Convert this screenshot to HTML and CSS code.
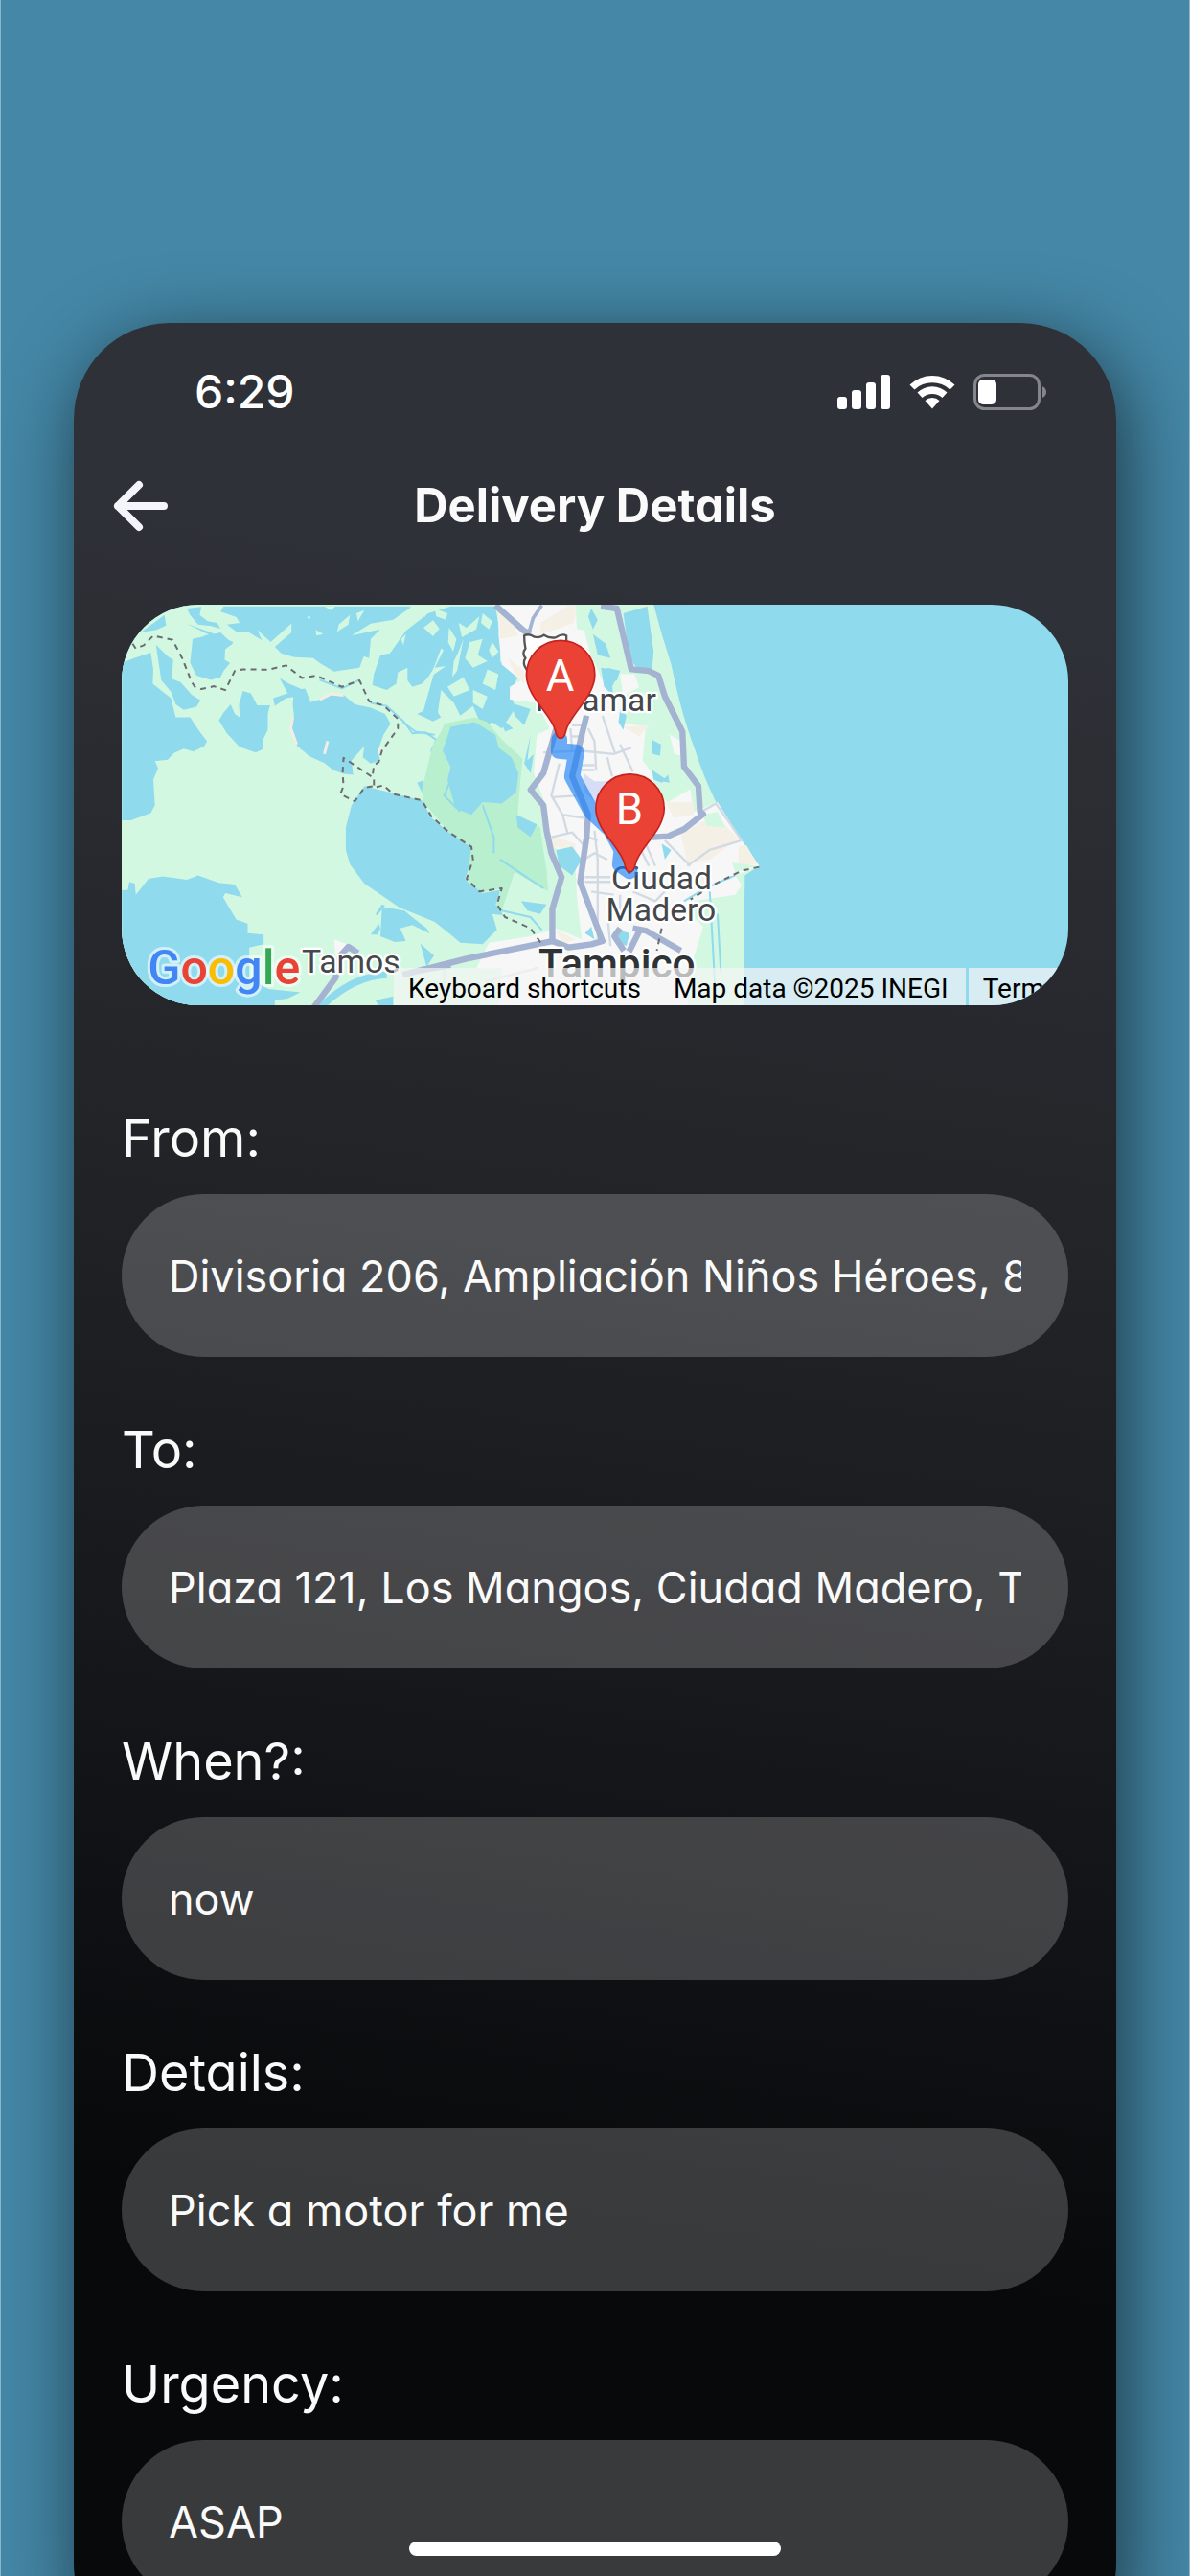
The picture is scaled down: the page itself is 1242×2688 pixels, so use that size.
FILE: index.html
```
<!DOCTYPE html>
<html lang="en">
<head>
    <meta charset="UTF-8">
    <meta name="viewport" content="width=device-width, initial-scale=1.0">
    <title>Delivery Details</title>
    <link rel="stylesheet" href="styles.css">
</head>
<body>

    <div class="stage">
        <main class="phone">
            <div class="status-bar">
                <span class="time">6:29</span>
                <div class="status-icons">
                    <svg class="signal" viewBox="0 0 56 38">
                        <rect x="0" y="24" width="10" height="13" rx="3"/>
                        <rect x="15" y="17" width="10" height="20" rx="3"/>
                        <rect x="30" y="9" width="10" height="28" rx="3"/>
                        <rect x="45" y="1" width="10" height="36" rx="3"/>
                    </svg>
                    <svg class="wifi" viewBox="0 0 48 38">
                        <path d="M0.500 11.500 A34 34 0 0 1 47.500 11.500 L42.500 16.500 A27 27 0 0 0 5.500 16.500 Z"/>
                        <path d="M8.500 19.500 A22.500 22.500 0 0 1 39.500 19.500 L34.500 25 A15.500 15.500 0 0 0 13.500 25 Z"/>
                        <path d="M16.500 28 A11 11 0 0 1 31.500 28 L24 36.500 Z"/>
                    </svg>
                    <svg class="battery" viewBox="0 0 77 38">
                        <rect class="battery-case" x="1.500" y="1.500" width="67" height="35" rx="10"/>
                        <rect x="5" y="6" width="19" height="26" rx="5"/>
                        <path class="battery-cap" d="M72 13 Q76 15 76 19 Q76 23 72 25 Z"/>
                    </svg>
                </div>
            </div>

            <header class="header">
                <button class="back" type="button" aria-label="Back">
                    <svg viewBox="0 0 58 54">
                        <path d="M27 5 L5 27 L27 49 M5 27 H53"/>
                    </svg>
                </button>
                <h1>Delivery Details</h1>
            </header>

            <div class="map">
                <svg class="map-canvas" viewBox="21 33 2961 1254" preserveAspectRatio="xMinYMin slice">
                    <defs>
                        <path id="pin" d="M0 0 C-10 0 -14 -10 -17 -25 C-28 -75 -107 -130 -107 -199 A107 107 0 0 1 107 -199 C107 -130 28 -75 17 -25 C14 -10 10 0 0 0 Z"/>
                    </defs>
                    <rect class="water" x="21" y="33" width="2961" height="1254"/>
                    <path class="land" d="M21 33 H1685 Q1710 130 1740 220 Q1770 370 1812 480 Q1840 570 1880 650 L2015 850 L1970 880 L1965 1290 H21 Z"/>

                    <!-- wetlands, west side -->
                    <g class="water">
                        <path d="M80 120 L155 65 160 98 130 112 Z"/>
                        <path d="M22 215 L60 200 112 183 120 235 118 280 175 325 190 385 235 385 265 430 288 460 280 475 245 492 215 483 185 497 165 518 125 522 135 545 120 580 125 660 112 685 50 707 22 707 Z"/>
                        <path d="M243 140 L330 120 368 155 345 172 343 205 360 215 340 240 330 260 300 268 255 255 235 215 Z"/>
                        <path d="M128 158 L165 195 182 205 178 265 205 275 240 315 268 332 255 352 215 362 190 345 175 305 145 270 Z"/>
                        <path d="M400 303 L425 310 445 348 485 348 478 375 478 425 463 455 463 485 440 495 390 478 350 435 325 395 340 370 362 345 375 375 390 385 388 345 Z"/>
                        <path d="M560 300 L595 295 612 338 640 330 680 312 715 315 750 345 800 355 845 375 862 405 840 440 822 490 830 520 800 530 775 510 780 475 740 520 745 565 715 562 683 550 655 528 610 508 570 475 550 420 560 380 556 345 Z"/>
                        <path d="M340 38 L930 38 870 80 800 92 740 130 830 110 800 140 795 200 778 195 765 230 685 242 640 215 620 200 560 197 520 185 500 165 552 120 552 92 487 150 445 112 460 145 420 120 380 118 350 95 390 90 380 72 330 55 Z"/>
                        <path d="M225 45 L270 40 265 65 290 85 320 90 330 108 300 100 260 95 235 65 Z"/>
                        <path d="M225 93 L300 120 370 150 365 158 290 125 Z M275 130 L305 125 300 135 Z"/>
                        <path d="M910 115 L935 95 980 60 1050 38 1190 38 1205 130 1205 210 1260 260 1240 300 1250 360 1210 420 1180 400 1150 420 1120 350 1080 380 1060 340 1020 300 1010 370 1020 385 995 398 945 375 965 365 980 310 1000 240 960 280 930 290 915 270 915 230 885 245 880 280 850 300 805 285 810 250 830 190 860 185 Z"/>
                        <path d="M515 262 L545 280 580 295 570 320 535 325 500 350 495 325 540 310 Z"/>
                        <path d="M780 600 L900 630 960 645 990 700 1045 745 1120 795 1110 850 1095 890 1150 935 1205 925 1195 965 1215 1005 1180 1000 1195 1050 1150 1095 1080 1090 1050 1065 1000 1025 890 980 780 905 735 845 722 800 722 730 740 660 Z"/>
                        <path d="M22 925 L40 925 45 900 62 905 65 940 105 890 150 883 225 893 260 880 325 903 375 908 398 948 345 935 338 948 380 1018 415 1030 415 1060 465 1065 465 1095 420 1105 420 1200 480 1235 580 1245 540 1265 500 1270 500 1290 22 1290 Z"/>
                        <path d="M835 985 L850 980 905 990 940 1018 975 1045 985 1062 930 1035 892 1045 910 1085 875 1088 830 1070 Z M815 1000 L835 970 845 975 820 1005 Z M800 1065 L825 1030 830 1045 822 1065 Z M955 1093 L998 1130 975 1165 Z M945 590 L965 582 975 625 960 620 Z M815 1270 L870 1258 870 1290 825 1290 Z"/>
                    </g>
                    <g class="land">
                        <path d="M700 95 L735 65 730 95 695 118 Z M628 112 L652 125 630 130 Z M755 60 L780 50 760 85 Z M655 38 L690 38 675 50 Z M600 72 L612 68 608 80 Z"/>
                        <path d="M965 105 L995 82 1015 108 995 132 Z M920 40 L975 40 970 72 940 55 Z M880 90 L905 55 930 90 900 110 Z M895 140 L910 125 902 160 Z"/>
                        <path d="M1020 170 L995 235 960 290 945 345 985 260 1035 225 1000 230 1028 175 Z M1045 105 L1068 140 1058 180 1042 150 Z"/>
                        <path d="M1075 90 L1100 105 1140 70 1130 110 1085 135 Z M1110 150 L1150 140 1135 190 1165 210 1120 230 1095 200 Z M1040 290 L1090 260 1110 300 1060 320 Z"/>
                        <path d="M1150 60 L1180 85 1170 110 1145 90 Z M1165 235 L1200 250 1190 300 1150 280 Z M1120 300 L1165 320 1150 360 1120 340 Z M1090 140 L1075 180 1060 210 1055 260 1070 240 Z"/>
                        <path d="M1000 45 L1040 60 1035 80 1005 70 Z M1180 150 L1200 180 1180 200 1170 175 Z"/>
                    </g>
                    <path class="river" d="M640 1295 Q740 1195 850 1190"/>
                    <path class="stream" d="M640 268 L710 295 765 268 M800 340 L850 350 905 400 930 435 970 432 1005 455 990 490 1015 550 1045 600 1030 640 1055 680"/>
                    <path class="sand-line" d="M640 330 L675 312 715 316 M556 385 L550 420 568 470 M665 460 L655 500 M835 480 L825 500"/>

                    <g transform="translate(900 0)">
                        <path class="park" d="M225 385 L265 400 310 455 375 515 365 620 360 690 430 730 440 800 450 860 455 930 350 870 310 990 290 970 310 920 250 932 200 900 215 790 145 745 65 650 60 610 95 470 120 430 130 405 Z"/>
                        <path class="water" d="M150 415 L225 400 290 440 300 480 340 510 362 560 355 620 310 655 250 650 215 690 165 670 140 580 150 540 125 490 Z"/>
                        <path class="land" d="M350 870 L455 930 465 1060 430 1060 400 1040 310 1000 Z"/>
                        <path class="water" d="M590 45 L610 80 595 110 580 70 Z M590 120 L640 150 650 210 610 190 Z M690 60 L765 38 785 180 780 235 735 235 710 200 Z M640 230 L680 240 670 270 640 280 Z"/>

                        <!-- built-up area -->
                        <path class="urban" d="M300 35 L540 35 545 110 580 115 590 190 620 260 640 300 680 330 680 400 760 415 750 520 780 560 790 630 830 650 900 610 910 680 985 650 1060 770 1115 850 1040 880 1060 910 1040 940 910 960 890 990 940 1040 900 1170 890 1290 300 1290 310 1170 230 1170 270 1090 400 1070 480 1045 560 1080 545 950 540 830 470 790 440 640 410 560 420 440 460 420 420 340 335 330 335 290 370 270 310 220 300 130 Z"/>
                        <path class="urban" d="M835 440 L870 460 870 505 850 500 Z M680 250 L725 250 740 290 690 320 Z"/>
                        <path class="sand" d="M300 45 L340 75 360 130 305 140 Z M430 90 L520 35 545 40 535 90 480 110 430 125 Z M330 200 L380 240 380 280 350 250 Z M690 415 L770 410 740 445 Z M820 650 L910 650 910 690 850 700 Z M870 750 L940 710 1000 715 1050 765 960 830 890 840 Z M1050 790 L1075 785 1110 845 1050 850 Z M480 1050 L540 1080 500 1095 Z M870 870 L960 870 960 910 900 900 Z M450 750 L540 780 540 800 470 790 Z"/>
                        <path class="land" d="M550 45 L620 40 680 130 700 200 640 225 590 200 Z M740 240 L790 250 810 340 790 380 740 350 Z M1030 840 L1110 850 1040 870 Z M940 690 L985 680 1010 730 950 725 Z"/>
                        <path class="water" d="M590 45 L610 80 595 110 580 70 Z M595 125 L635 155 650 200 610 190 Z M620 230 L680 240 655 290 660 320 630 290 Z M480 800 L530 790 560 830 530 880 490 850 Z M680 360 L700 380 690 425 675 400 Z M778 455 L808 470 805 505 782 500 Z M810 780 L840 800 820 830 Z M570 1060 L590 1040 600 1080 Z M780 550 L825 580 810 590 785 580 Z M670 1050 L710 1060 700 1100 670 1090 Z M810 585 L830 565 835 590 Z"/>
                        <path class="water" d="M300 250 L330 290 320 320 295 290 Z M340 340 L400 360 380 410 350 380 Z M300 380 L345 420 320 430 Z M400 440 L390 520 410 500 400 560 380 530 Z M355 690 L420 720 400 760 360 730 Z M370 960 L450 970 430 1000 390 990 Z"/>
                        <path class="zone" d="M565 560 L600 585 650 585 610 660 570 620 Z"/>
                        <path class="stream" d="M150 580 L130 630 180 680 M250 660 L285 760 285 810 M305 830 L380 880 440 920 M310 990 L400 1010 435 1050 M960 920 L980 1280 M0 400 L40 430 100 440 M985 1000 L995 1180 M880 960 Q960 910 1040 880"/>

                        <g class="minor-roads">
                            <path d="M525 420 L530 490 M530 410 H570 M530 445 H570 M580 420 L600 460 605 550 M440 495 L560 490 660 500 715 480 M625 380 L665 500 M680 470 L720 555 M640 510 L655 570 M560 535 H600 M560 550 H600"/>
                            <path d="M490 530 L465 630 500 690 570 700 M470 635 L550 630 M500 690 L515 745 M465 760 L530 745 570 790 M600 740 L610 830 610 1080 M560 835 L600 810 640 830 M570 885 H650 M570 900 H650 M590 930 L660 940 M640 1000 L650 1100 M580 760 L610 770"/>
                            <path d="M820 770 L900 850 M890 850 L960 800 1060 770 980 655 935 680 M740 790 L770 850 M760 780 L790 850 M720 930 L790 960 820 930 M130 1170 V1290 M260 1210 L340 1190 420 1170 M680 940 L680 990"/>
                        </g>
                        <g class="roads">
                            <path d="M290 35 L380 115 400 125"/>
                            <path class="thin" d="M435 35 L408 75 395 120"/>
                            <path d="M480 420 L440 560 400 612 440 660 450 740 465 810 497 885 468 985 468 1085"/>
                            <path d="M575 380 L560 440 530 570 580 690 575 760 555 900 625 1085 590 1095 520 1105 468 1085"/>
                            <path d="M0 1190 L60 1175 200 1140 468 1085"/>
                            <path d="M620 38 L670 45 715 235 770 240 800 255 820 320 875 430 880 540 925 600 930 680 940 688 880 735 830 757 780 760"/>
                            <path d="M720 1045 L760 1052 870 1115 M742 1050 L708 1118 M680 1045 L662 1070 692 1115"/>
                        </g>
                        <path class="shield" d="M380 130 Q395 122 412 134 Q430 138 442 128 Q460 140 480 135 Q500 122 512 130 V200 H500 V240 H390 Q372 215 384 200 Q372 185 384 170 Q380 150 380 130 Z"/>
                        <path class="border" d="M1115 853 L1060 865 980 905 900 955 M810 1045 L795 1115"/>
                    </g>

                    <g class="roads">
                        <path class="urban" d="M685 1080 L740 1100 720 1140 690 1130 Z"/>
                        <path d="M620 1295 L690 1200 705 1130 730 1103 760 1122 M960 1175 L1050 1160"/>
                    </g>
                    <path class="border" d="M55 155 L65 170 90 160 120 130 180 143 210 200 240 275 250 290 270 297 310 288 345 300 375 240 400 235 480 236 535 223 585 262 630 255 710 290 765 270 795 335 840 348 885 390 885 420 835 490 825 525 810 535 805 572 715 512 712 560 715 600 705 625 750 648 780 605 810 600 M810 580 V605 L840 598 870 625 960 645 990 695 1045 745 1115 790 1120 830 1100 890 1140 930 1210 920 1195 970 1220 1010 1300 1045 1335 1095"/>

                    <g class="labels" transform="translate(900 0)">
                        <text x="604" y="365">Miramar</text>
                        <text x="810" y="922">Ciudad</text>
                        <text x="808" y="1022">Madero</text>
                        <text class="city" x="670" y="1198">Tampico</text>
                        <text x="-162" y="1183">Tamos</text>
                    </g>

                    <g transform="translate(900 0)">
                        <path class="route" d="M490 455 L488 490 543 495 530 570 590 680 650 735 685 800 680 845 710 866"/>
                        <use class="pin" href="#pin" x="494" y="451"/>
                        <use class="pin" href="#pin" x="711" y="869"/>
                        <text class="pin-label" x="492" y="302">A</text>
                        <text class="pin-label" x="709" y="719">B</text>
                    </g>

                    <text class="google" x="103" y="1221"><tspan class="g-blue">G</tspan><tspan class="g-red">o</tspan><tspan class="g-yellow">o</tspan><tspan class="g-blue">g</tspan><tspan class="g-green">l</tspan><tspan class="g-red">e</tspan></text>
                </svg>
                <div class="map-footer">
                    <div class="map-credits">
                        <button type="button">Keyboard shortcuts</button>
                        <span>Map data ©2025 INEGI</span>
                    </div>
                    <a class="map-terms" href="#">Terms</a>
                </div>
            </div>

            <form class="details">
                <div class="field">
                    <label for="from">From:</label>
                    <input type="text" id="from" value="Divisoria 206, Ampliación Niños Héroes, 89">
                </div>
                <div class="field">
                    <label for="to">To:</label>
                    <input type="text" id="to" value="Plaza 121, Los Mangos, Ciudad Madero, Tamaulipas">
                </div>
                <div class="field">
                    <label for="when">When?:</label>
                    <input type="text" id="when" value="now">
                </div>
                <div class="field">
                    <label for="details">Details:</label>
                    <input type="text" id="details" value="Pick a motor for me">
                </div>
                <div class="field">
                    <label for="urgency">Urgency:</label>
                    <input type="text" id="urgency" value="ASAP">
                </div>
            </form>
        </main>
        <div class="home-indicator"></div>
    </div>

</body>
</html>
```
FILE: styles.css
```
* {
    box-sizing: border-box;
}
body {
    margin: 0;
    font-family: Inter, "Open Sans", sans-serif;
    font-feature-settings: "cv11";
    background-color: #4487a6;
    color: #fafafa;
}
.stage {
    position: relative;
    height: 100vh;
    padding: 337px 76px 0;
    border: solid #8fb5c8;
    border-width: 0 1px;
    overflow: hidden;
}
.phone {
    padding: 0 50px 60px;
    border-radius: 100px;
    background: linear-gradient(188deg, #2f3138 12%, #232529 36%, #17181b 58%, #07090b 80%);
    box-shadow: 8px 20px 80px rgba(0, 0, 0, 0.6);
}

/* Status bar */
.status-bar {
    display: flex;
    justify-content: space-between;
    align-items: center;
    height: 144px;
    padding: 0 22px 0 76px;
}
.time {
    font-size: 48px;
    font-weight: 500;
    line-height: 56px;
    color: #fff;
}
.status-icons {
    display: flex;
    align-items: center;
    gap: 19px;
}
.status-icons svg {
    height: 38px;
    fill: #fff;
}
.signal {
    width: 56px;
}
.wifi {
    width: 48px;
}
.battery {
    width: 77px;
}
.battery .battery-case {
    fill: none;
    stroke: #85868b;
    stroke-width: 3;
}
.battery .battery-cap {
    fill: #85868b;
}

/* Header */
.header {
    display: grid;
    grid-template-columns: 58px 1fr 58px;
    align-items: center;
    height: 94px;
    margin: 0 -9px;
}
.header h1 {
    margin: 0;
    font-size: 49px;
    font-weight: 700;
    line-height: 60px;
    text-align: center;
}
.back {
    padding: 0;
    border: none;
    background: none;
    cursor: pointer;
}
.back svg {
    display: block;
    width: 58px;
    fill: none;
    stroke: #f4f5fb;
    stroke-width: 8;
    stroke-linecap: round;
    stroke-linejoin: round;
}

/* Map */
.map {
    position: relative;
    height: 418px;
    margin-top: 56px;
    border-radius: 80px;
    overflow: hidden;
    font-family: Roboto, sans-serif;
    font-feature-settings: normal;
}
.map-canvas {
    display: block;
    width: 100%;
    height: 100%;
}
.water {
    fill: #90daee;
}
.land {
    fill: #d3f8e2;
}
.park {
    fill: #b8efcf;
}
.map .urban {
    fill: #f7f7f7;
    stroke: none;
}
.sand {
    fill: #f5f0e5;
}
.zone {
    fill: #d5def5;
}
.river,
.stream,
.sand-line,
.minor-roads,
.roads,
.border,
.route {
    fill: none;
    stroke-linejoin: round;
}
.river {
    stroke: #90daee;
    stroke-width: 22;
}
.stream {
    stroke: #90daee;
    stroke-width: 6;
}
.sand-line {
    stroke: #f3ede4;
    stroke-width: 9;
}
.minor-roads {
    stroke: #d2dae3;
    stroke-width: 7;
}
.roads {
    stroke: #a3b3d1;
    stroke-width: 19;
}
.roads .thin {
    stroke-width: 11;
}
.border {
    stroke: #6c6c72;
    stroke-width: 6;
    stroke-dasharray: 18 15;
}
.shield {
    fill: #fff;
    stroke: #555;
    stroke-width: 7;
}
.route {
    stroke: rgba(20, 125, 248, 0.62);
    stroke-width: 50;
    stroke-linecap: round;
}
.labels text {
    font-size: 101px;
    text-anchor: middle;
    fill: #44474b;
    stroke: #fff;
    stroke-width: 14;
    stroke-linejoin: round;
    paint-order: stroke;
}
.labels .city {
    font-size: 127px;
    font-weight: 500;
    fill: #303336;
}
.pin {
    fill: #ea4335;
    stroke: #c5221f;
    stroke-width: 5;
}
.pin-label {
    font-size: 136px;
    text-anchor: middle;
    fill: #fff;
}
.google {
    font-size: 150px;
    font-weight: 500;
    stroke: rgba(255, 255, 255, 0.6);
    stroke-width: 18;
    stroke-linejoin: round;
    paint-order: stroke;
}
.g-blue {
    fill: #4285f4;
}
.g-red {
    fill: #ea4335;
}
.g-yellow {
    fill: #fbbc04;
}
.g-green {
    fill: #34a853;
}
.map-footer {
    position: absolute;
    bottom: 0;
    left: 284px;
    display: flex;
    gap: 3px;
    font-size: 28px;
    line-height: 35px;
    white-space: nowrap;
    color: #000;
}
.map-credits,
.map-terms {
    padding: 4px 18px 0 15px;
    background-color: rgba(245, 245, 245, 0.7);
}
.map-credits {
    display: flex;
    gap: 34px;
}
.map-footer button {
    padding: 0;
    border: none;
    background: none;
    font: inherit;
    color: inherit;
    cursor: pointer;
}
.map-terms {
    color: inherit;
    text-decoration: none;
}

/* Form */
.details {
    display: flex;
    flex-direction: column;
    gap: 57px;
    margin-top: 99px;
}
.field {
    display: flex;
    flex-direction: column;
    gap: 18px;
}
.field label {
    font-size: 54px;
    line-height: 80px;
}
.field input {
    width: 100%;
    height: 170px;
    padding: 0 49px;
    border: none;
    border-radius: 85px;
    background-color: rgba(255, 255, 255, 0.2);
    font-family: inherit;
    font-feature-settings: inherit;
    font-size: 45px;
    color: #fafafa;
    outline: none;
}

/* Bar over the bottom of the screen */
.home-indicator {
    position: absolute;
    left: 50%;
    bottom: 21px;
    width: 388px;
    height: 15px;
    border-radius: 8px;
    background-color: #fff;
    transform: translateX(-50%);
}
```
